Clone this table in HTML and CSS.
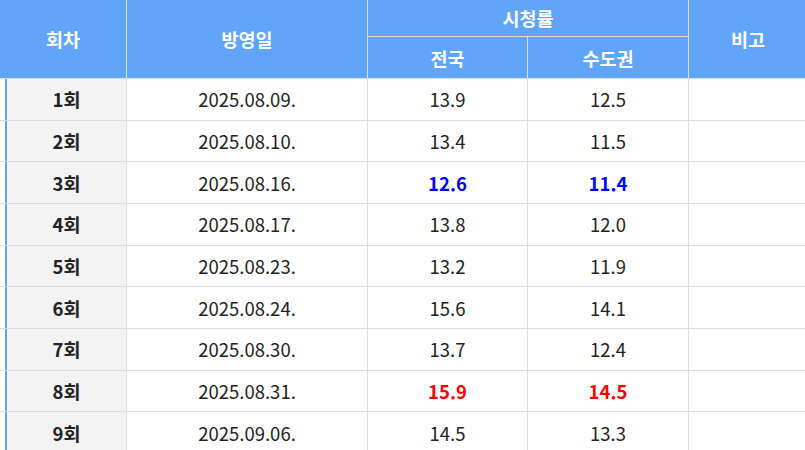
FILE: index.html
```html
<!DOCTYPE html>
<html lang="ko">
<head>
<meta charset="utf-8">
<link rel="stylesheet" href="styles.css">
</head>
<body>
<table class="ratings">
  <colgroup>
    <col class="c1"><col class="c2"><col class="c3"><col class="c4"><col class="c5">
  </colgroup>
  <thead>
    <tr class="h1">
      <th rowspan="2">회차</th>
      <th rowspan="2">방영일</th>
      <th colspan="2">시청률</th>
      <th rowspan="2" class="last">비고</th>
    </tr>
    <tr class="h2">
      <th>전국</th>
      <th>수도권</th>
    </tr>
  </thead>
  <tbody>
    <tr><td class="ep">1회</td><td>2025.08.09.</td><td>13.9</td><td>12.5</td><td class="last"></td></tr>
    <tr><td class="ep">2회</td><td>2025.08.10.</td><td>13.4</td><td>11.5</td><td class="last"></td></tr>
    <tr><td class="ep">3회</td><td>2025.08.16.</td><td class="low">12.6</td><td class="low">11.4</td><td class="last"></td></tr>
    <tr><td class="ep">4회</td><td>2025.08.17.</td><td>13.8</td><td>12.0</td><td class="last"></td></tr>
    <tr><td class="ep">5회</td><td>2025.08.23.</td><td>13.2</td><td>11.9</td><td class="last"></td></tr>
    <tr><td class="ep">6회</td><td>2025.08.24.</td><td>15.6</td><td>14.1</td><td class="last"></td></tr>
    <tr><td class="ep">7회</td><td>2025.08.30.</td><td>13.7</td><td>12.4</td><td class="last"></td></tr>
    <tr><td class="ep">8회</td><td>2025.08.31.</td><td class="high">15.9</td><td class="high">14.5</td><td class="last"></td></tr>
    <tr><td class="ep">9회</td><td>2025.09.06.</td><td>14.5</td><td>13.3</td><td class="last"></td></tr>
  </tbody>
</table>
</body>
</html>
```

FILE: styles.css
```css
html, body {
  margin: 0;
  padding: 0;
  background: #fff;
  overflow: hidden;
}
body {
  width: 805px;
  height: 450px;
}
.ratings {
  border-collapse: separate;
  border-spacing: 0;
  table-layout: fixed;
  width: 807px;
  font-family: "Noto Sans CJK KR", "Noto Sans", sans-serif;
  font-size: 18.5px;
  color: #222;
}
.c1 { width: 127px; }
.c2 { width: 241px; }
.c3 { width: 160px; }
.c4 { width: 161px; }
.c5 { width: 118px; }
.ratings th {
  background: #60a5fa;
  color: #fff;
  font-weight: 700;
  text-align: center;
  padding: 0;
  border-right: 1px solid #d8dde4;
  border-bottom: 1px solid #d8dde4;
  line-height: 24px;
}
.ratings th.last, .ratings td.last { border-right: none; }
.ratings thead tr.h1 th { height: 36px; }
.ratings thead tr.h2 th { height: 41px; }
.ratings td {
  height: 40.67px;
  padding: 0;
  text-align: center;
  border-right: 1px solid #dcdcdc;
  border-bottom: 1px solid #dcdcdc;
  line-height: 24px;
  background: #fff;
}
.ratings td.ep {
  font-weight: 700;
  background: linear-gradient(to right, #fff 0 5px, #60a5fa 5px 7px, #f3f3f3 7px);
  padding-left: 7px;
}
.ratings td.low { color: #0000ff; font-weight: 700; }
.ratings td.high { color: #ff0000; font-weight: 700; }
```
